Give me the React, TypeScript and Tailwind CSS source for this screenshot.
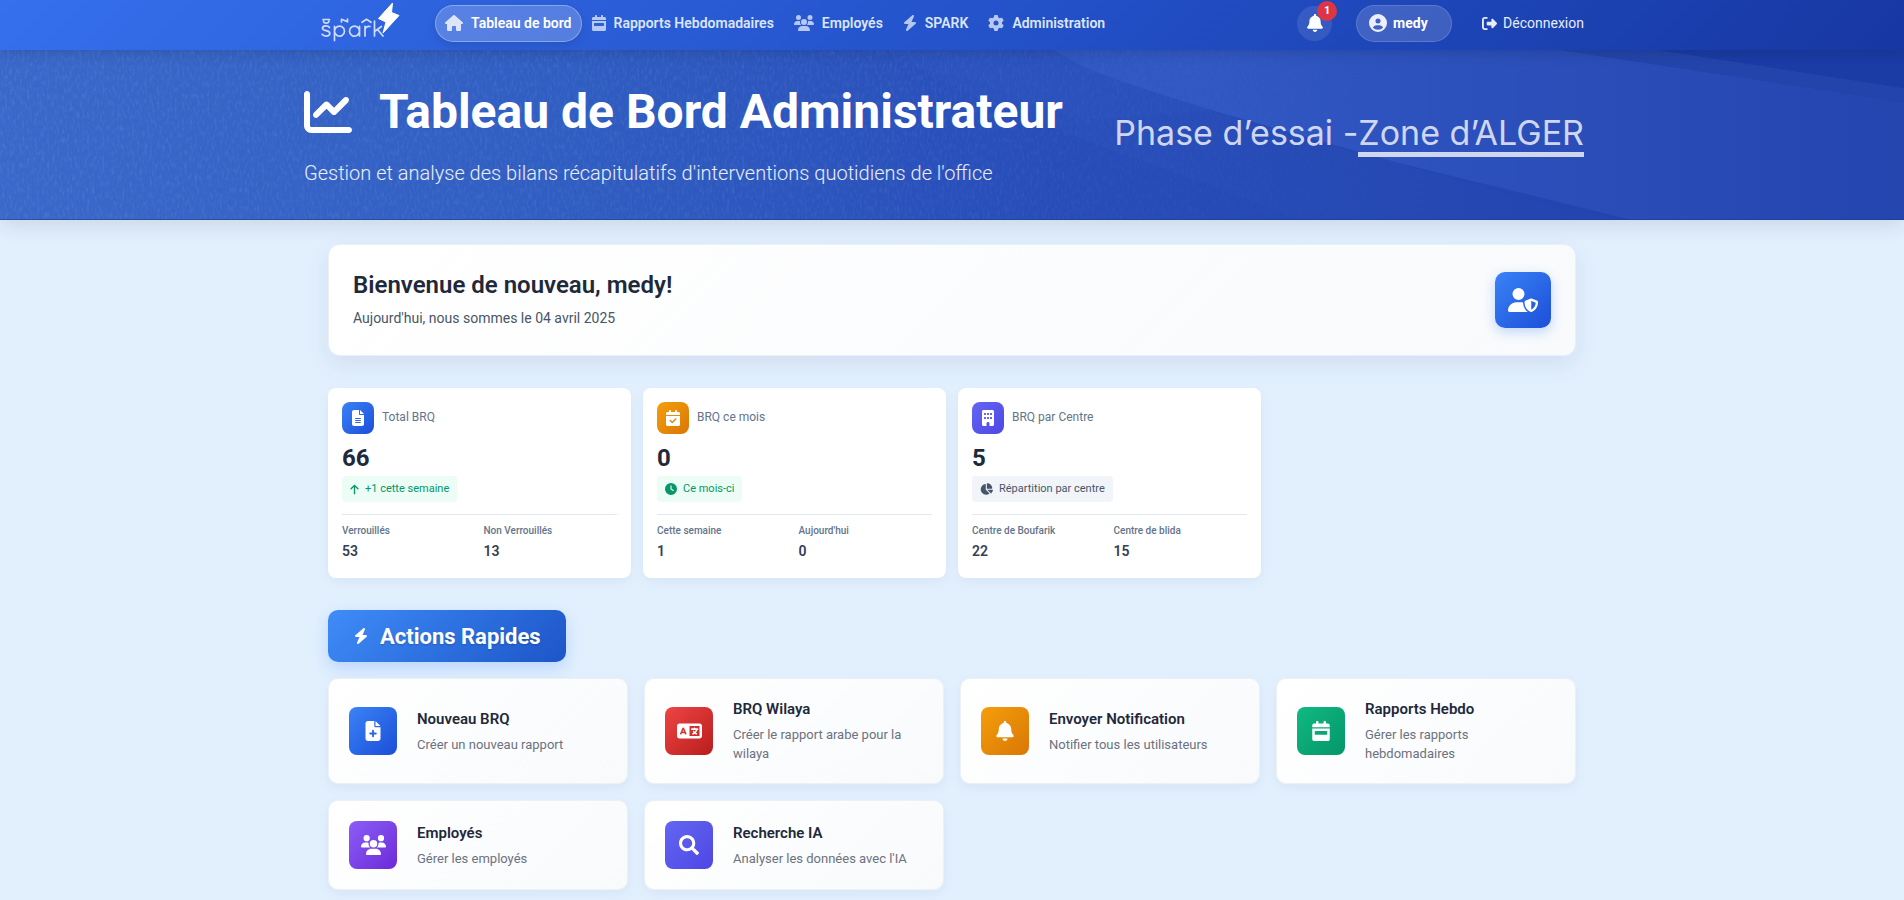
import React from "react";
import type { IconType } from "react-icons";
import { FaSearch } from "react-icons/fa";
import {
  FaHouse, FaCalendarWeek, FaUsers, FaBolt, FaGear, FaBell, FaCircleUser, FaRightFromBracket,
  FaChartLine, FaUserShield, FaFileLines, FaCalendarCheck, FaBuilding, FaArrowUp, FaClock,
  FaChartPie, FaLanguage,
} from "react-icons/fa6";

const NAV: { label: string; icon: IconType; size: string; active?: boolean }[] = [
  { label: "Tableau de bord", icon: FaHouse, size: "h-4 w-[18px]", active: true },
  { label: "Rapports Hebdomadaires", icon: FaCalendarWeek, size: "h-4 w-[14px]" },
  { label: "Employés", icon: FaUsers, size: "h-4 w-5" },
  { label: "SPARK", icon: FaBolt, size: "h-4 w-[14px]" },
  { label: "Administration", icon: FaGear, size: "h-4 w-4" },
];

const FilePlus: IconType = (props) => (
  <svg viewBox="0 0 384 512" width="1em" height="1em" fill="currentColor" className={props.className}>
    <path
      fillRule="evenodd"
      d="M64 0C28.700 0 0 28.700 0 64V448c0 35.300 28.700 64 64 64H320c35.300 0 64-28.700 64-64V160H256c-17.700 0-32-14.300-32-32V0H64zM256 0V128H384L256 0zM168 248a24 24 0 0 1 48 0v48h48a24 24 0 0 1 0 48h-48v48a24 24 0 0 1-48 0v-48h-48a24 24 0 0 1 0-48h48z"
    />
  </svg>
);

const STATS = [
  {
    label: "Total BRQ", value: "66", icon: FaFileLines, tile: "from-[#3b82f6] to-[#1d4ed8]",
    badge: "+1 cette semaine", badgeIcon: FaArrowUp, badgeIconSize: "h-[11px] w-[9px]", badgeStyle: "bg-[#ecfdf5] text-[#059669]",
    details: [["Verrouillés", "53"], ["Non Verrouillés", "13"]],
  },
  {
    label: "BRQ ce mois", value: "0", icon: FaCalendarCheck, tile: "from-[#f59e0b] to-[#d97706]",
    badge: "Ce mois-ci", badgeIcon: FaClock, badgeIconSize: "size-3", badgeStyle: "bg-[#ecfdf5] text-[#059669]",
    details: [["Cette semaine", "1"], ["Aujourd'hui", "0"]],
  },
  {
    label: "BRQ par Centre", value: "5", icon: FaBuilding, tile: "from-[#6366f1] to-[#4f46e5]",
    badge: "Répartition par centre", badgeIcon: FaChartPie, badgeIconSize: "h-3 w-[13px]", badgeStyle: "bg-[#f1f5f9] text-[#475569]",
    details: [["Centre de Boufarik", "22"], ["Centre de blida", "15"]],
  },
];

const ACTIONS: { title: string; text: string; icon: IconType; size: string; tile: string }[] = [
  { title: "Nouveau BRQ", text: "Créer un nouveau rapport", icon: FilePlus, size: "size-5", tile: "from-[#3b82f6] to-[#1d4ed8]" },
  { title: "BRQ Wilaya", text: "Créer le rapport arabe pour la wilaya", icon: FaLanguage, size: "h-5 w-[25px]", tile: "from-[#ef4444] to-[#b91c1c]" },
  { title: "Envoyer Notification", text: "Notifier tous les utilisateurs", icon: FaBell, size: "size-5", tile: "from-[#f59e0b] to-[#d97706]" },
  { title: "Rapports Hebdo", text: "Gérer les rapports hebdomadaires", icon: FaCalendarWeek, size: "size-5", tile: "from-[#10b981] to-[#059669]" },
  { title: "Employés", text: "Gérer les employés", icon: FaUsers, size: "h-5 w-[25px]", tile: "from-[#8b5cf6] to-[#6d28d9]" },
  { title: "Recherche IA", text: "Analyser les données avec l'IA", icon: FaSearch, size: "size-5", tile: "from-[#6366f1] to-[#4f46e5]" },
];

function Logo() {
  return (
    <a href="#accueil" aria-label="Spark" className="block">
      <svg viewBox="0 0 80 42" className="h-[42px] w-20" fill="none">
        <g stroke="#d0dcf9" strokeWidth="1.7" strokeLinecap="round" strokeLinejoin="round">
          <path d="M9.500 25.500C8 23.300 2.500 23.300 2.500 26.300C2.500 29.800 9.800 27.600 9.800 31.200C9.800 34.800 4 34.800 2 32.300" />
          <path d="M3 17.500h6.500M3.500 19a2.700 2.200 0 1 0 5.400 0" />
          <path d="M14.500 38.500V24.300M14.500 29a5 5 0 1 1 0 0.300" />
          <path d="M21.500 20V17.300L27.500 19.800V17" />
          <path d="M39.500 34V24.300M39.500 29a5 5 0 1 0 0 0.300" />
          <path d="M45 34V24.300M45 28c0-2.800 2.500-4.200 5-3.500M42 20.300l4.500-3 4.500 3" />
          <path d="M54.500 19V34M61.500 24.500l-7 5M57.500 27.500l5.500 6.500" />
        </g>
        <path d="M72.500 1L58.500 16.500L66 20L63 31L79 13.500L71.500 10.500Z" fill="#fff" stroke="#fff" strokeLinejoin="round" />
      </svg>
    </a>
  );
}

function Navbar() {
  return (
    <header className="relative z-10 bg-linear-135 from-[#3670ed] via-[#2453cb] to-[#1737a3] shadow-[0_2px_12px_rgba(15,23,42,0.2)]">
      <div className="mx-auto flex h-[50px] max-w-[1320px] items-center px-3 pb-1">
        <div className="mr-[35px] pl-4"><Logo /></div>
        <nav className="flex items-center text-sm font-semibold text-[#dbe5fa]">
          {NAV.map(({ label, icon: Icon, size, active }) => (
            <a
              key={label}
              href="#"
              className={
                active
                  ? "flex h-[37px] items-center gap-2 rounded-full border border-white/30 bg-white/20 px-[9px] text-white shadow-[0_4px_8px_rgba(0,0,0,0.1)]"
                  : "flex h-[37px] items-center gap-2 border border-transparent px-[9px]"
              }
            >
              <Icon className={`${size} opacity-80`} />
              {label}
            </a>
          ))}
        </nav>
        <div className="ml-auto flex items-center text-sm text-white">
          <button type="button" aria-label="Notifications" className="relative mr-6 flex size-[35px] items-center justify-center rounded-full bg-white/10">
            <FaBell className="size-[18px]" />
            <span className="absolute -top-[5px] -right-[5px] flex size-5 items-center justify-center rounded-full bg-[#dc3545] text-[11px] font-bold">1</span>
          </button>
          <button type="button" className="mr-6 flex h-[37px] w-24 items-center gap-1.5 rounded-full border border-white/15 bg-white/15 pl-3 font-bold">
            <FaCircleUser className="size-[18px] opacity-90" />
            medy
          </button>
          <a href="#deconnexion" className="flex items-center gap-1.5 pr-4 pl-1.5 text-[#e6ecfa]">
            <FaRightFromBracket className="size-[15px]" />
            Déconnexion
          </a>
        </div>
      </div>
    </header>
  );
}

function HeroTexture() {
  return (
    <svg className="absolute inset-0 size-full" viewBox="0 0 1904 170" preserveAspectRatio="none" aria-hidden="true">
      <defs>
        <linearGradient id="heroBase" x1="0" y1="0" x2="1" y2="0">
          <stop offset="0" stopColor="#3a68ca" />
          <stop offset="0.3" stopColor="#305dc1" />
          <stop offset="0.55" stopColor="#284db9" />
          <stop offset="1" stopColor="#1e3fa8" />
        </linearGradient>
        <linearGradient id="heroWall" x1="0" y1="0" x2="1" y2="0">
          <stop offset="0" stopColor="#3058c4" />
          <stop offset="0.3" stopColor="#345bc7" />
          <stop offset="1" stopColor="#2646b0" />
        </linearGradient>
        <linearGradient id="heroGround" x1="0" y1="0" x2="1" y2="0">
          <stop offset="0" stopColor="#2c54bf" />
          <stop offset="1" stopColor="#2344ae" />
        </linearGradient>
        <linearGradient id="grassFade" x1="0" y1="0" x2="1" y2="0">
          <stop offset="0" stopColor="#fff" />
          <stop offset="0.45" stopColor="#fff" stopOpacity="0.8" />
          <stop offset="0.75" stopColor="#fff" stopOpacity="0" />
        </linearGradient>
        <mask id="grassMask"><rect width="1904" height="170" fill="url(#grassFade)" /></mask>
        <filter id="grass" x="0" y="0" width="100%" height="100%">
          <feTurbulence type="fractalNoise" baseFrequency="0.4 0.16" numOctaves="3" seed="4" />
          <feColorMatrix values="0 0 0 0 0.55  0 0 0 0 0.7  0 0 0 0 1  1.6 0 0 0 -0.72" />
        </filter>
      </defs>
      <rect width="1904" height="170" fill="url(#heroBase)" />
      <path d="M890 0H1560L1904 52V170H1632L1395 112L1211 60L1080 70Z" fill="url(#heroWall)" opacity="0.8" />
      <path d="M890 0H1055C1090 25 1150 40 1211 60C1290 88 1340 98 1395 112C1480 138 1560 160 1632 170H1300C1180 120 1000 70 890 0Z" fill="url(#heroGround)" opacity="0.85" />
      <path d="M1560 0H1658L1904 38V52Z" fill="#2344aa" />
      <path d="M1658 0H1904V38Z" fill="#1b3ba5" />
      <rect width="1904" height="170" filter="url(#grass)" mask="url(#grassMask)" opacity="0.16" />
      <rect y="169" width="1904" height="1" fill="#1d3f86" opacity="0.6" />
    </svg>
  );
}

function Hero() {
  return (
    <section className="relative bg-[#2b55bf] text-white shadow-[0_4px_20px_rgba(15,23,42,0.13)]">
      <HeroTexture />
      <div className="relative mx-auto flex min-h-[170px] max-w-[1320px] items-center justify-between px-3">
        <div>
          <h1 className="flex items-center gap-[27px] text-5xl leading-[58px] font-bold">
            <FaChartLine className="size-12" />
            Tableau de Bord Administrateur
          </h1>
          <p className="mt-[17px] text-xl leading-[30px] font-light text-white/90">
            Gestion et analyse des bilans récapitulatifs d'interventions quotidiens de l'office
          </p>
        </div>
        <p className="mr-4 flex font-['Inter',sans-serif] text-[34px] leading-[38px] text-[#cfd6ef]">
          <span>Phase d’essai -</span>
          <span className="border-b-[5px] border-[#cfd6ef]">Zone d’ALGER</span>
        </p>
      </div>
    </section>
  );
}

export default function App() {
  return (
    <div className="min-h-screen bg-[#e2f0fe] pb-[10px] font-['Roboto',sans-serif] text-[#1e293b]">
      <Navbar />
      <Hero />
      <main className="mx-auto max-w-[1320px] px-9 pt-6">
        <section className="flex items-center justify-between rounded-xl border border-[#e9f0f7] bg-linear-135 from-white to-[#f8fafc] px-6 py-[26px] shadow-[0_8px_24px_rgba(30,58,100,0.09)]">
          <div>
            <h2 className="text-2xl leading-7 font-semibold">Bienvenue de nouveau, medy!</h2>
            <p className="mt-2 text-sm leading-[22px] text-[#475569]">Aujourd'hui, nous sommes le 04 avril 2025</p>
          </div>
          <div className="flex size-14 items-center justify-center rounded-[10px] bg-linear-135 from-[#3b82f6] to-[#1d4ed8] text-white shadow-[0_4px_12px_rgba(59,130,246,0.3)]">
            <FaUserShield className="h-6 w-[30px]" />
          </div>
        </section>

        <section className="mt-8 grid grid-cols-4 gap-3">
          {STATS.map(({ label, value, icon: Icon, tile, badge, badgeIcon: BadgeIcon, badgeIconSize, badgeStyle, details }) => (
            <article key={label} className="rounded-lg bg-white p-3.5 pb-[17px] shadow-[0_4px_12px_rgba(30,58,100,0.06)]">
              <div className="flex items-center gap-2">
                <div className={`flex size-8 items-center justify-center rounded-lg bg-linear-135 text-white ${tile}`}>
                  <Icon className="size-4" />
                </div>
                <h3 className="pb-0.5 text-xs text-[#64748b]">{label}</h3>
              </div>
              <p className="mt-2.5 text-2xl leading-7 font-bold">{value}</p>
              <p className={`mt-1 inline-flex h-[26px] items-center gap-1.5 rounded px-2 text-[11px] ${badgeStyle}`}>
                <BadgeIcon className={badgeIconSize} />
                {badge}
              </p>
              <dl className="mt-3 grid grid-cols-2 gap-2 border-t border-[#e2e8f0] pt-[9px]">
                {details.map(([name, count]) => (
                  <div key={name}>
                    <dt className="text-[10px] leading-[14px] font-medium text-[#64748b]">{name}</dt>
                    <dd className="mt-[3px] text-sm leading-5 font-semibold text-[#334155]">{count}</dd>
                  </div>
                ))}
              </dl>
            </article>
          ))}
        </section>

        <h2 className="mt-8 inline-flex h-[52px] items-center gap-[11px] rounded-[10px] bg-linear-135 from-[#3f8cf8] to-[#1e55c9] px-[25px] text-[22px] font-bold text-white shadow-[0_6px_16px_rgba(59,130,246,0.25)] text-shadow-[0_1px_2px_rgba(0,0,0,0.2)]">
          <FaBolt className="size-4" />
          Actions Rapides
        </h2>

        <section className="mt-4 grid grid-cols-4 gap-4">
          {ACTIONS.map(({ title, text, icon: Icon, size, tile }) => (
            <a
              key={title}
              href="#"
              className="flex items-center gap-5 rounded-[10px] border border-[#ecf1f6] bg-linear-135 from-white to-[#f8fafc] p-5 shadow-[0_4px_12px_rgba(30,58,100,0.06)]"
            >
              <span className={`flex size-12 shrink-0 items-center justify-center rounded-lg bg-linear-135 text-white ${tile}`}>
                <Icon className={size} />
              </span>
              <span className="block">
                <span className="block text-[15px] leading-5 font-semibold">{title}</span>
                <span className="mt-1.5 block text-[13px] leading-[19px] text-[#6b7280]">{text}</span>
              </span>
            </a>
          ))}
        </section>
      </main>
    </div>
  );
}
